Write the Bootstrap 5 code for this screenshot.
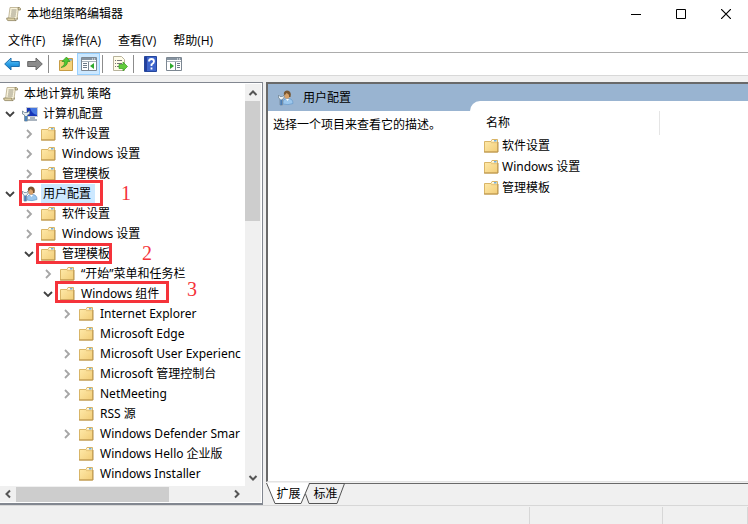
<!DOCTYPE html>
<html lang="zh-CN">
<head>
<meta charset="utf-8">
<meta name="viewport" content="width=device-width, initial-scale=1">
<title>本地组策略编辑器</title>
<link href="https://cdn.jsdelivr.net/npm/bootstrap@5.3.0/dist/css/bootstrap.min.css" rel="stylesheet">
<style>
body{font:12px/20px "Open Sans","Noto Sans CJK SC",sans-serif;color:#000;background:#f0f0f0}
button{border:0;padding:0;background:none;color:inherit;font:inherit;line-height:inherit}
svg{display:block;flex:none}
ul{list-style:none;margin:0;padding:0}
.titlebar{height:28px;padding-left:6px}
.titlebar h1{font-size:12px;line-height:20px;font-weight:400;margin:0 0 0 5px}
.winbtn{width:45px;height:28px}
.menubar{padding:2px 0 0 8px;gap:17px;border-bottom:1px solid #acacac;box-sizing:content-box;height:22px}
.toolbar{height:23px;border-bottom:1px solid #d8d8d8}
.toolbtn{width:23px;height:22px;display:flex;align-items:center;justify-content:center}
.toolbtn.pressed{background:#cce8ff;border:1px solid #99d1ff}
.vline{width:1px;height:18px;margin:0 5px 0 2px;background:#8c8c8c}
.workspace{padding-top:6px;gap:3px}
.treepane{width:263px;border:1px solid #828790;border-left:0;border-bottom-width:2px;padding:1px 1px 1px 0}
.tree{width:245px;overflow:hidden;white-space:nowrap}
.tree,.list{font-family:"Noto Sans","Noto Sans CJK SC",sans-serif}
.tree .deep{padding-left:19px}
.node{height:20px;padding-left:3px;position:relative}
.node .twist{width:19px;height:20px;flex:none;padding-left:2px}
.node .ico{width:19px;flex:none}
.caption{padding:0 2px}
.chosen{background:#cce8ff;padding-right:4px}
.sbar{background:#f0f0f0}
.vbar{width:16px}
.hbar{height:16px}
.sbtn{width:16px;height:17px;display:flex;align-items:center;justify-content:center}
.vthumb{height:120px;width:15px;background:#cdcdcd}
.hthumb{width:153px;height:15px;background:#cdcdcd}
.ring{position:absolute;border:3px solid #f5333a;z-index:2}
.digit{position:absolute;z-index:2;color:#f5333a;font:20px/20px "Liberation Serif",serif}
.ring1{left:19px;top:-4px;width:84px;height:26px}
.digit1{left:121px;top:-1px}
.ring2{left:17px;top:-1px;width:76px;height:21px}
.digit2{left:123px;top:-1px}
.ring3{left:17px;top:-3px;width:114px;height:22px}
.digit3{left:149px;top:-5px}
.detail{border-left:2px solid #696969;border-top:2px solid #696969;border-bottom:1px solid #e3e3e3;background:#fff}
.band{height:27px;background:#99b4d1;padding-left:10px}
.band h2{font-size:12px;line-height:20px;font-weight:400;margin:0 0 0 9px}
.about{width:202px;padding:4px 0 0 5px}
.listwrap{margin-top:-10px;background:#fff;border-top-left-radius:10px;padding:10px 0 0 14px;position:relative}
.list{width:176px}
.list th{font-weight:400;height:24px;border-right:1px solid #e5e5e5;padding:0 0 0 2px}
.list td{height:21px;padding:0}
.tabs{height:22px;position:relative;border-top:1px solid #696969;margin-top:1px}
.tabs svg{position:absolute;left:0;top:-1px}
.tabs .tab{position:relative;height:20px;width:37px;text-align:center}
.status{height:19px;border-top:1px solid #d7d7d7;padding-top:1px}
.status div{border-right:1px solid #d7d7d7}
.cell2{width:133px}.cell3{width:85px}
</style>
<script src="https://cdn.jsdelivr.net/npm/bootstrap@5.3.0/dist/js/bootstrap.bundle.min.js"></script>
</head>
<body class="vh-100 d-flex flex-column overflow-hidden">
<svg width="0" height="0" class="position-absolute" aria-hidden="true">
<defs><linearGradient id="fg" x2="1" y2="1"><stop stop-color="#ffebac"/><stop offset="1" stop-color="#f2cd78"/></linearGradient>
<linearGradient id="bg" x2="0" y2="1"><stop stop-color="#7fd0f7"/><stop offset=".5" stop-color="#2a9fe6"/><stop offset="1" stop-color="#1275c4"/></linearGradient></defs>
<symbol id="folder" viewBox="0 0 16 16"><path d="M.5 3.500h6.500l1-2h5.500v12.500h-13z" fill="url(#fg)" stroke="#d9b567"/><path d="M8 2h5v1.500H7.500z" fill="#fffbe8"/><path d="M10 2.800h2.500" stroke="#4f9ddd" stroke-width="1.200"/><path d="M7 4.700h6.500" stroke="#dfbd72" stroke-width=".8"/><path d="M0 14h14V4" fill="none" stroke="#b8924a"/></symbol>
<symbol id="scroll" viewBox="0 0 16 16"><path d="M4 1.500h8.500L11 13H2.500z" fill="#faf4dc" stroke="#b5aa88" stroke-width=".8"/><path d="M12 1.500h1.500q1.500.5 1 2.500H12.300z" fill="#d6caa0" stroke="#8e835f" stroke-width=".8"/><path d="M.7 12h8q-.3 2.300 1.300 2.600H2Q.5 14.200.7 12z" fill="#ddd0a5" stroke="#8e835f" stroke-width=".8"/><path d="M10 14.600q1.400-.6 1.400-3" fill="none" stroke="#8e835f"/><path d="M5.500 4h5M5.300 6h5M5 8h5M4.700 10h5" stroke="#8f8a78" stroke-width=".9"/></symbol>
<symbol id="pc" viewBox="0 0 16 16"><path d="M4.500 1.500h11v9h-11z" fill="#1635b8" stroke="#c6cbd5"/><path d="M8 2h7v7q-5-1-7-7z" fill="#4677e0"/><path d="M8 11h5v2h2v2H6v-2h2z" fill="#aab4bf"/><path d="M.5 5v3l2 1v6h3V9l2-1V5L5.500 6.500h-3z" fill="#e7ecef" stroke="#698291" stroke-width=".8"/><path d="M3 10h2v5H3z" fill="#4c83bd"/></symbol>
<symbol id="user" viewBox="0 0 16 16"><path d="M5 14q-.5-5 4-5.500 6-.5 6 5-5 2-10 .5z" fill="#9bc7ed" stroke="#6d9dcc" stroke-width=".8"/><path d="M8 9l1.500 2L11 9z" fill="#fff"/><ellipse cx="9" cy="5" rx="3" ry="3.700" fill="#d8a26a"/><path d="M6 5Q5 1 9 .5q5 .5 3.500 6.500H11Q11.500 4 8.500 3 7.500 5 6 5z" fill="#765531"/><path d="M.5 5v3L2 9v6h2.500V9L6 8V5L4.500 6.500H2z" fill="#eef2f4" stroke="#74899a" stroke-width=".8"/><path d="M2.200 9.500h2V15h-2z" fill="#4b7db5"/></symbol>
<symbol id="shut" viewBox="0 0 10 10"><path d="M3 1l4 4-4 4" fill="none" stroke="#a6a6a6" stroke-width="1.800"/></symbol>
<symbol id="open" viewBox="0 0 10 10"><path d="M1 3l4 4 4-4" fill="none" stroke="#404040" stroke-width="1.800"/></symbol>
<symbol id="arr" viewBox="0 0 10 10"><path d="M1.500 7L5 3.500 8.500 7" fill="none" stroke="#555" stroke-width="2"/></symbol>
<symbol id="panel" viewBox="0 0 16 14"><path d="M.5.5h15v13H.5z" fill="#fff" stroke="#7c8792"/><path d="M1 1h14v2H1z" fill="#8794a1"/><path d="M11 2h1M13 2h1" stroke="#fff"/><path d="M1 4.500h14" stroke="#a9b3bc"/></symbol>
</svg>

<header class="bg-white">
<div class="titlebar d-flex align-items-center">
<svg width="16" height="16"><use href="#scroll"/></svg><h1>本地组策略编辑器</h1>
<div class="ms-auto d-flex">
<button class="winbtn" aria-label="最小化"><svg class="mx-auto" width="10" height="10"><path d="M0 5.500h10" stroke="#000"/></svg></button>
<button class="winbtn" aria-label="最大化"><svg class="mx-auto" width="10" height="10"><path d="M.5.5h9v9h-9z" fill="none" stroke="#000"/></svg></button>
<button class="winbtn" aria-label="关闭"><svg class="mx-auto" width="10" height="10"><path d="M0 0l10 10M10 0L0 10" stroke="#000" stroke-width="1.200"/></svg></button>
</div></div>
<nav class="menubar d-flex" aria-label="菜单">
<button>文件(F)</button><button>操作(A)</button><button>查看(V)</button><button>帮助(H)</button>
</nav>
<div class="toolbar d-flex align-items-center">
<button class="toolbtn" aria-label="后退"><svg width="16" height="14"><path d="M.7 7L7 1v3.500h8.300v5H7V13z" fill="url(#bg)" stroke="#1c6fae"/></svg></button>
<button class="toolbtn" aria-label="前进"><svg width="16" height="14"><path d="M15.300 7L9 1v3.500H.7v5H9V13z" fill="#8b8b8b" stroke="#686868"/></svg></button>
<span class="vline"></span>
<button class="toolbtn" aria-label="上一级"><svg width="16" height="16"><path d="M1.500 4.500h6l1-2h6v12h-13z" fill="#f5d27a" stroke="#c79d45"/><path d="M11 3h3v1.500h-3z" fill="#73aee2"/><path d="M3 11.500q4.500-2 3.500-6H4L8.500 1l3.500 4.500H9.500q0 5-6.500 6z" fill="#4fc832" stroke="#2d941b" stroke-width=".7"/></svg></button>
<button class="toolbtn pressed" aria-label="显示控制台树"><svg width="16" height="14"><use href="#panel"/><path d="M7.500 5v8" stroke="#7c8792"/><path d="M2 6.500h4M2 8.500h4M2 10.500h4" stroke="#6c7a88"/><path d="M13 6v6L9 9z" fill="#2faa2d"/></svg></button>
<span class="vline"></span>
<button class="toolbtn" aria-label="导出列表"><svg width="16" height="16"><path d="M1.500.5h8l3 3v11h-11z" fill="#fffce9" stroke="#b8b39b"/><path d="M3 4.500h1M3 7.500h1M3 10.500h1M5 4.500h5M5 7.500h5M5 10.500h3" stroke="#777"/><path d="M7 8.500h4V6l4.500 4.500L11 15v-2.500H7z" fill="#61cc3c" stroke="#379e22" stroke-width=".7"/></svg></button>
<span class="vline"></span>
<button class="toolbtn" aria-label="帮助"><svg width="13" height="16"><path d="M.5.5h12v15H.5z" fill="#3d64cb" stroke="#25479c"/><path d="M1 1h2v14H1z" fill="#243f9c"/><path d="M5 5.500Q5 3 7.500 3t2.500 2.500Q10 7 7.500 8.500V10M7.500 11.500v2" fill="none" stroke="#fff" stroke-width="1.800"/></svg></button>
<button class="toolbtn" aria-label="显示操作窗格"><svg width="16" height="14"><use href="#panel"/><path d="M9.500 5v8" stroke="#7c8792"/><path d="M11 6.500h3M11 8.500h3M11 10.500h3" stroke="#6c7a88"/><path d="M4 6v6l4-3z" fill="#2faa2d"/></svg></button>
</div>
</header>

<main class="workspace d-flex flex-fill overflow-hidden">
<section class="treepane bg-white d-flex flex-column flex-shrink-0">
<div class="d-flex flex-fill overflow-hidden">
<nav class="tree" aria-label="控制台树"><ul>
<li><div class="node d-flex align-items-center"><span class="ico"><svg width="16" height="16"><use href="#scroll"/></svg></span><span class="caption">本地计算机 策略</span></div>
<ul>
<li><div class="node d-flex align-items-center"><button class="twist" aria-label="折叠"><svg width="10" height="10"><use href="#open"/></svg></button><span class="ico"><svg width="16" height="16"><use href="#pc"/></svg></span><span class="caption">计算机配置</span></div>
<ul class="deep">
<li><div class="node d-flex align-items-center"><button class="twist" aria-label="展开"><svg width="10" height="10"><use href="#shut"/></svg></button><span class="ico"><svg width="16" height="16"><use href="#folder"/></svg></span><span class="caption">软件设置</span></div></li>
<li><div class="node d-flex align-items-center"><button class="twist" aria-label="展开"><svg width="10" height="10"><use href="#shut"/></svg></button><span class="ico"><svg width="16" height="16"><use href="#folder"/></svg></span><span class="caption">Windows 设置</span></div></li>
<li><div class="node d-flex align-items-center"><button class="twist" aria-label="展开"><svg width="10" height="10"><use href="#shut"/></svg></button><span class="ico"><svg width="16" height="16"><use href="#folder"/></svg></span><span class="caption">管理模板</span></div></li>
</ul></li>
<li><div class="node d-flex align-items-center"><button class="twist" aria-label="折叠"><svg width="10" height="10"><use href="#open"/></svg></button><span class="ico"><svg width="16" height="16"><use href="#user"/></svg></span><span class="caption chosen">用户配置</span><span class="ring ring1"></span><span class="digit digit1">1</span></div>
<ul class="deep">
<li><div class="node d-flex align-items-center"><button class="twist" aria-label="展开"><svg width="10" height="10"><use href="#shut"/></svg></button><span class="ico"><svg width="16" height="16"><use href="#folder"/></svg></span><span class="caption">软件设置</span></div></li>
<li><div class="node d-flex align-items-center"><button class="twist" aria-label="展开"><svg width="10" height="10"><use href="#shut"/></svg></button><span class="ico"><svg width="16" height="16"><use href="#folder"/></svg></span><span class="caption">Windows 设置</span></div></li>
<li><div class="node d-flex align-items-center"><button class="twist" aria-label="折叠"><svg width="10" height="10"><use href="#open"/></svg></button><span class="ico"><svg width="16" height="16"><use href="#folder"/></svg></span><span class="caption">管理模板</span><span class="ring ring2"></span><span class="digit digit2">2</span></div>
<ul class="deep">
<li><div class="node d-flex align-items-center"><button class="twist" aria-label="展开"><svg width="10" height="10"><use href="#shut"/></svg></button><span class="ico"><svg width="16" height="16"><use href="#folder"/></svg></span><span class="caption">“开始”菜单和任务栏</span></div></li>
<li><div class="node d-flex align-items-center"><button class="twist" aria-label="折叠"><svg width="10" height="10"><use href="#open"/></svg></button><span class="ico"><svg width="16" height="16"><use href="#folder"/></svg></span><span class="caption">Windows 组件</span><span class="ring ring3"></span><span class="digit digit3">3</span></div>
<ul class="deep">
<li><div class="node d-flex align-items-center"><button class="twist" aria-label="展开"><svg width="10" height="10"><use href="#shut"/></svg></button><span class="ico"><svg width="16" height="16"><use href="#folder"/></svg></span><span class="caption">Internet Explorer</span></div></li>
<li><div class="node d-flex align-items-center"><span class="twist"></span><span class="ico"><svg width="16" height="16"><use href="#folder"/></svg></span><span class="caption">Microsoft Edge</span></div></li>
<li><div class="node d-flex align-items-center"><button class="twist" aria-label="展开"><svg width="10" height="10"><use href="#shut"/></svg></button><span class="ico"><svg width="16" height="16"><use href="#folder"/></svg></span><span class="caption">Microsoft User Experienc</span></div></li>
<li><div class="node d-flex align-items-center"><button class="twist" aria-label="展开"><svg width="10" height="10"><use href="#shut"/></svg></button><span class="ico"><svg width="16" height="16"><use href="#folder"/></svg></span><span class="caption">Microsoft 管理控制台</span></div></li>
<li><div class="node d-flex align-items-center"><button class="twist" aria-label="展开"><svg width="10" height="10"><use href="#shut"/></svg></button><span class="ico"><svg width="16" height="16"><use href="#folder"/></svg></span><span class="caption">NetMeeting</span></div></li>
<li><div class="node d-flex align-items-center"><span class="twist"></span><span class="ico"><svg width="16" height="16"><use href="#folder"/></svg></span><span class="caption">RSS 源</span></div></li>
<li><div class="node d-flex align-items-center"><button class="twist" aria-label="展开"><svg width="10" height="10"><use href="#shut"/></svg></button><span class="ico"><svg width="16" height="16"><use href="#folder"/></svg></span><span class="caption">Windows Defender Smar</span></div></li>
<li><div class="node d-flex align-items-center"><span class="twist"></span><span class="ico"><svg width="16" height="16"><use href="#folder"/></svg></span><span class="caption">Windows Hello 企业版</span></div></li>
<li><div class="node d-flex align-items-center"><span class="twist"></span><span class="ico"><svg width="16" height="16"><use href="#folder"/></svg></span><span class="caption">Windows Installer</span></div></li>
</ul></li>
</ul></li>
</ul></li>
</ul></li>
</ul></nav>
<div class="sbar vbar ms-auto d-flex flex-column"><button class="sbtn" aria-label="向上滚动"><svg width="10" height="10"><use href="#arr"/></svg></button><div class="vthumb"></div><button class="sbtn mt-auto" aria-label="向下滚动"><svg width="10" height="10"><use href="#arr" transform="rotate(180 5 5)"/></svg></button></div>
</div>
<div class="sbar hbar d-flex align-items-center flex-shrink-0"><button class="sbtn" aria-label="向左滚动"><svg width="10" height="10"><use href="#arr" transform="rotate(-90 5 5)"/></svg></button><div class="hthumb"></div><button class="sbtn ms-auto me-3" aria-label="向右滚动"><svg width="10" height="10"><use href="#arr" transform="rotate(90 5 5)"/></svg></button></div>
</section>

<section class="d-flex flex-column flex-fill">
<div class="detail flex-fill">
<div class="band d-flex align-items-center"><svg width="16" height="16"><use href="#user"/></svg><h2>用户配置</h2></div>
<div class="d-flex">
<p class="about m-0 flex-shrink-0">选择一个项目来查看它的描述。</p>
<div class="listwrap flex-fill">
<table class="list">
<thead><tr><th scope="col">名称</th></tr></thead>
<tbody>
<tr><td><span class="d-flex align-items-center"><svg width="16" height="16"><use href="#folder"/></svg><span class="caption">软件设置</span></span></td></tr>
<tr><td><span class="d-flex align-items-center"><svg width="16" height="16"><use href="#folder"/></svg><span class="caption">Windows 设置</span></span></td></tr>
<tr><td><span class="d-flex align-items-center"><svg width="16" height="16"><use href="#folder"/></svg><span class="caption">管理模板</span></span></td></tr>
</tbody></table>
</div></div>
</div>
<div class="tabs d-flex"><svg width="90" height="22" aria-hidden="true"><path d="M0 0h43L35 20H9z" fill="#fff"/><path d="M.5 0L9 20.500h26L43.500.5H78.500L71 20.500H43L39.500 11" fill="none" stroke="#555"/></svg><button class="tab ms-1">扩展</button><button class="tab">标准</button></div>
</section>
</main>
<footer class="status d-flex"><div class="flex-fill"></div><div class="cell2"></div><div class="cell3"></div></footer>
</body>
</html>
